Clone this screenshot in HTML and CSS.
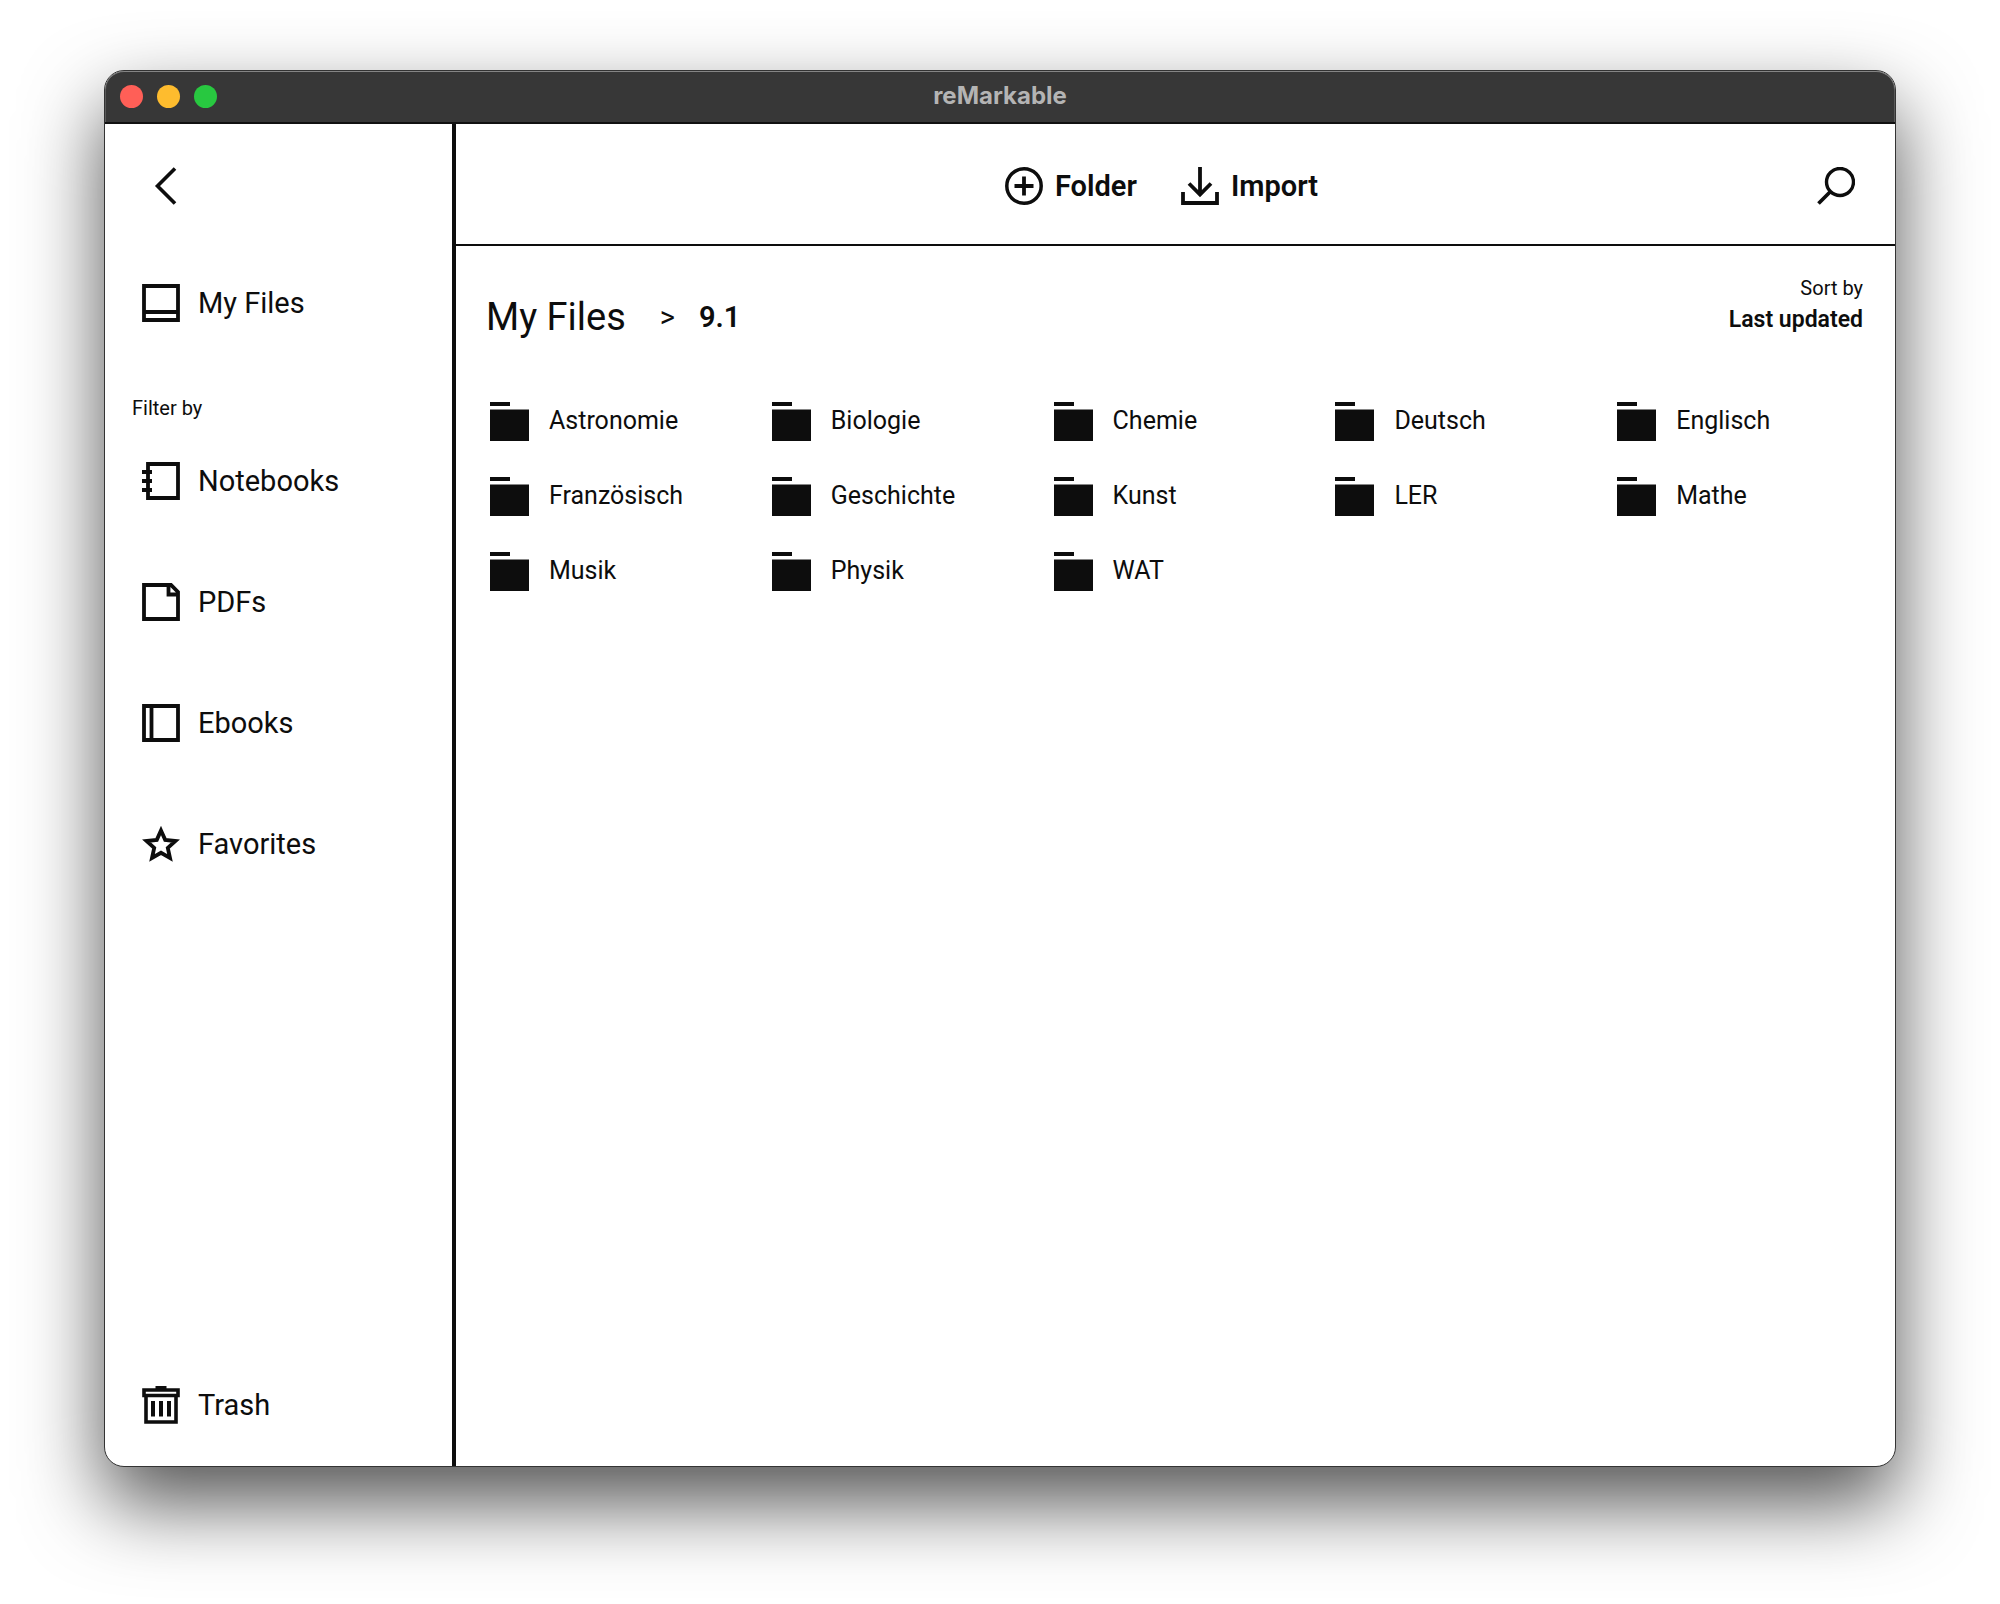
FILE: index.html
```html
<!DOCTYPE html>
<html lang="en">
<head>
<meta charset="utf-8">
<meta name="viewport" content="width=device-width, initial-scale=1">
<title>reMarkable</title>
<link rel="stylesheet" href="styles.css">
</head>
<body>
<svg class="sprite" aria-hidden="true">
  <symbol id="folder" viewBox="0 0 39 40"><path d="M0 1h20v4H0zM0 8.500h39V40H0z" fill="currentColor"/></symbol>
</svg>
<div class="window">
  <header class="titlebar">
    <div class="lights">
      <span class="light light-close"></span>
      <span class="light light-minimize"></span>
      <span class="light light-zoom"></span>
    </div>
    <div class="window-title">reMarkable</div>
  </header>
  <div class="app">
    <aside class="sidebar">
      <button class="back" type="button" aria-label="Back">
        <svg class="icon" viewBox="0 0 38 38"><path d="M30 1.500 12.500 19 30 36.500" fill="none" stroke="currentColor" stroke-width="3.600"/></svg>
      </button>
      <nav class="nav" aria-label="Files">
        <a class="nav-item" href="#files">
          <svg class="icon" viewBox="0 0 38 38"><path d="M2 2h34v34H2zM2 28h34" fill="none" stroke="currentColor" stroke-width="3.800"/></svg>
          My Files
        </a>
        <p class="filter-label">Filter by</p>
        <a class="nav-item" href="#notebooks">
          <svg class="icon" viewBox="0 0 38 38"><path d="M6 2h30v34H6zM0 10h10M0 19h10M0 28h10" fill="none" stroke="currentColor" stroke-width="3.800"/></svg>
          Notebooks
        </a>
        <a class="nav-item" href="#pdfs">
          <svg class="icon" viewBox="0 0 38 38"><path d="M2 2h27l7 7v27H2zM26.500 2v9.500H36" fill="none" stroke="currentColor" stroke-width="3.800"/></svg>
          PDFs
        </a>
        <a class="nav-item" href="#ebooks">
          <svg class="icon" viewBox="0 0 38 38"><path d="M2 2h34v34H2zM9.500 2v34" fill="none" stroke="currentColor" stroke-width="3.800"/></svg>
          Ebooks
        </a>
        <a class="nav-item" href="#favorites">
          <svg class="icon" viewBox="0 0 38 38"><path d="m19 5.500 4.200 9.400 10.300 1.100-7.700 6.900 2.200 10.100-9-5.200-9 5.200 2.200-10.100L4.500 16l10.300-1.100z" fill="none" stroke="currentColor" stroke-width="3.800"/></svg>
          Favorites
        </a>
        <a class="nav-item nav-trash" href="#trash">
          <svg class="icon" viewBox="0 0 38 38"><path d="M2 4h34v5.500H2zM4 9.500h30V36H4z" fill="none" stroke="currentColor" stroke-width="3.600"/><path d="M13.500 0h11v4h-11zM9 15h4v15.500H9zM17 15h4v15.500h-4zM25 15h4v15.500h-4z" fill="currentColor"/></svg>
          Trash
        </a>
      </nav>
    </aside>
    <main class="main">
      <div class="toolbar">
        <div class="actions">
          <button class="action" type="button">
            <svg class="icon" viewBox="0 0 38 38"><circle cx="19" cy="19" r="17.200" fill="none" stroke="currentColor" stroke-width="3.500"/><path d="M19 9.500v19M9.500 19h19" stroke="currentColor" stroke-width="3.800"/></svg>
            Folder
          </button>
          <button class="action" type="button">
            <svg class="icon" viewBox="0 0 38 38"><path d="M19 0v27M8 16.500l11 11 11-11M2 25v11h34V25" fill="none" stroke="currentColor" stroke-width="3.800"/></svg>
            Import
          </button>
        </div>
        <button class="search" type="button" aria-label="Search">
          <svg class="icon" viewBox="0 0 38 38"><circle cx="23" cy="15" r="13.500" fill="none" stroke="currentColor" stroke-width="3.400"/><path d="M13.500 24.500 1.500 36.500" stroke="currentColor" stroke-width="3.800"/></svg>
        </button>
      </div>
      <div class="location">
        <nav class="breadcrumb" aria-label="Breadcrumb">
          <a class="crumb-root" href="#files">My Files</a>
          <span class="crumb-arrow">&gt;</span>
          <h1 class="crumb-current">9.1</h1>
        </nav>
        <div class="sort">
          <span class="sort-label" id="sort-label">Sort by</span>
          <button class="sort-value" type="button" aria-describedby="sort-label">Last updated</button>
        </div>
      </div>
      <div class="folders">
        <a class="folder" href="#astronomie"><svg class="folder-icon"><use href="#folder"/></svg>Astronomie</a>
        <a class="folder" href="#biologie"><svg class="folder-icon"><use href="#folder"/></svg>Biologie</a>
        <a class="folder" href="#chemie"><svg class="folder-icon"><use href="#folder"/></svg>Chemie</a>
        <a class="folder" href="#deutsch"><svg class="folder-icon"><use href="#folder"/></svg>Deutsch</a>
        <a class="folder" href="#englisch"><svg class="folder-icon"><use href="#folder"/></svg>Englisch</a>
        <a class="folder" href="#franzoesisch"><svg class="folder-icon"><use href="#folder"/></svg>Französisch</a>
        <a class="folder" href="#geschichte"><svg class="folder-icon"><use href="#folder"/></svg>Geschichte</a>
        <a class="folder" href="#kunst"><svg class="folder-icon"><use href="#folder"/></svg>Kunst</a>
        <a class="folder" href="#ler"><svg class="folder-icon"><use href="#folder"/></svg>LER</a>
        <a class="folder" href="#mathe"><svg class="folder-icon"><use href="#folder"/></svg>Mathe</a>
        <a class="folder" href="#musik"><svg class="folder-icon"><use href="#folder"/></svg>Musik</a>
        <a class="folder" href="#physik"><svg class="folder-icon"><use href="#folder"/></svg>Physik</a>
        <a class="folder" href="#wat"><svg class="folder-icon"><use href="#folder"/></svg>WAT</a>
      </div>
    </main>
  </div>
</div>
</body>
</html>
```
FILE: styles.css
```css
* {
  box-sizing: border-box;
}

body {
  display: flex;
  min-height: 100vh;
  margin: 0;
  padding: 70px 104px 137px;
  background: #fff;
  color: #0d0d0d;
  font-family: Roboto, "Liberation Sans", sans-serif;
  font-size: 29px;
  line-height: 36px;
}

a {
  color: inherit;
  text-decoration: none;
}

button {
  padding: 0;
  border: 0;
  background: none;
  color: inherit;
  font: inherit;
  cursor: pointer;
}

.sprite {
  display: none;
}

.icon {
  flex: none;
  display: block;
  width: 38px;
  height: 38px;
}

.window {
  display: flex;
  flex: 1;
  flex-direction: column;
  overflow: hidden;
  border: 1px solid #333;
  border-radius: 20px;
  background: #fff;
  box-shadow: 0 36px 80px rgba(0, 0, 0, 0.68);
}

.titlebar {
  display: grid;
  grid-template-columns: 1fr auto 1fr;
  align-items: center;
  height: 53px;
  padding: 0 15px;
  border-bottom: 2px solid #111;
  border-radius: 19px 19px 0 0;
  background: #373737;
  box-shadow: inset 0 1px #858585, inset 1px 0 #5a5a5a, inset -1px 0 #5a5a5a;
}

.lights {
  display: flex;
  gap: 14px;
}

.light {
  width: 23px;
  height: 23px;
  border-radius: 50%;
}

.light-close {
  background: #ff5f57;
}

.light-minimize {
  background: #febc2e;
}

.light-zoom {
  background: #28c840;
}

.window-title {
  padding-bottom: 2px;
  color: #b4b4b4;
  font-family: Inter, "Liberation Sans", sans-serif;
  font-size: 24px;
  font-weight: 700;
}

.app {
  display: flex;
  flex: 1;
}

.sidebar {
  display: flex;
  flex: none;
  flex-direction: column;
  width: 351px;
  border-right: 4px solid #0d0d0d;
}

.back {
  align-self: flex-start;
  margin: 43px 0 79px 40px;
}

.nav {
  display: flex;
  flex: 1;
  flex-direction: column;
  padding-bottom: 42px;
}

.nav-item {
  display: flex;
  align-items: center;
  gap: 18px;
  height: 38px;
  margin-bottom: 83px;
  padding-left: 37px;
}

.filter-label {
  margin: -9px 0 42px;
  padding-left: 27px;
  font-size: 20px;
  line-height: 24px;
}

.nav-trash {
  margin-top: auto;
  margin-bottom: 0;
}

.main {
  flex: 1;
  min-width: 0;
}

.toolbar {
  display: grid;
  grid-template-columns: 1fr auto 1fr;
  align-items: center;
  height: 122px;
  padding: 3px 40px 0;
  border-bottom: 2px solid #0d0d0d;
}

.actions {
  display: flex;
  grid-column: 2;
  gap: 44px;
  padding-right: 28px;
}

.action {
  display: flex;
  align-items: center;
  gap: 12px;
  font-weight: 600;
}

.search {
  justify-self: end;
}

.location {
  display: flex;
  justify-content: space-between;
  padding: 28px 32px 0 30px;
}

.breadcrumb {
  display: flex;
  align-items: center;
  height: 85px;
}

.crumb-root {
  font-size: 38px;
}

.crumb-arrow {
  margin: 0 24px 0 34px;
  font-size: 29px;
}

.crumb-current {
  margin: 0;
  font-size: 29px;
  font-weight: 600;
}

.sort {
  display: flex;
  flex-direction: column;
  align-items: flex-end;
  gap: 4px;
}

.sort-label {
  font-size: 20px;
  line-height: 28px;
}

.sort-value {
  font-size: 23px;
  font-weight: 600;
  line-height: 28px;
}

.folders {
  display: grid;
  grid-template-columns: repeat(5, 1fr);
  row-gap: 35px;
  padding: 42px 0 42px 30px;
}

.folder {
  display: flex;
  align-items: center;
  gap: 20px;
  padding-left: 4px;
  font-size: 25px;
}

.folder-icon {
  flex: none;
  width: 39px;
  height: 40px;
}
```
